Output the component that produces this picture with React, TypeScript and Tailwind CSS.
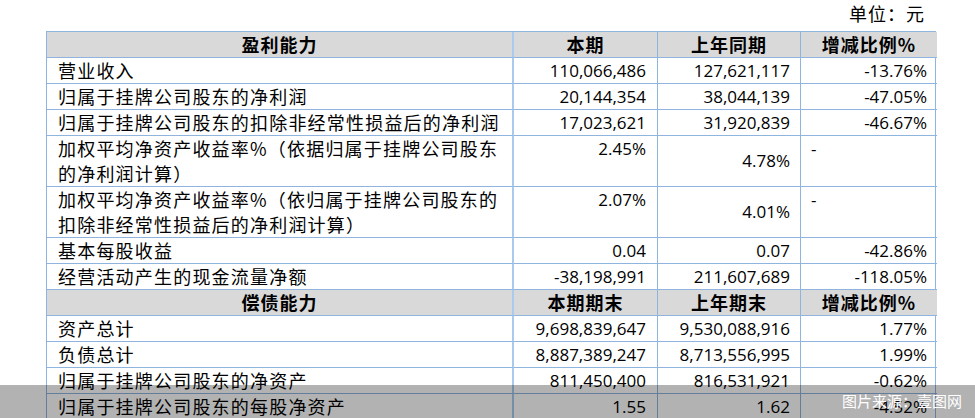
type Row = {
  label: string;
  cur: string;
  prev: string;
  rate: string;
  tall?: boolean;
  head?: boolean;
};

const rows: Row[] = [
  { label: "盈利能力", cur: "本期", prev: "上年同期", rate: "增减比例%", head: true },
  { label: "营业收入", cur: "110,066,486", prev: "127,621,117", rate: "-13.76%" },
  { label: "归属于挂牌公司股东的净利润", cur: "20,144,354", prev: "38,044,139", rate: "-47.05%" },
  { label: "归属于挂牌公司股东的扣除非经常性损益后的净利润", cur: "17,023,621", prev: "31,920,839", rate: "-46.67%" },
  {
    label: "加权平均净资产收益率%（依据归属于挂牌公司股东的净利润计算）",
    cur: "2.45%",
    prev: "4.78%",
    rate: "-",
    tall: true,
  },
  {
    label: "加权平均净资产收益率%（依归属于挂牌公司股东的扣除非经常性损益后的净利润计算）",
    cur: "2.07%",
    prev: "4.01%",
    rate: "-",
    tall: true,
  },
  { label: "基本每股收益", cur: "0.04", prev: "0.07", rate: "-42.86%" },
  { label: "经营活动产生的现金流量净额", cur: "-38,198,991", prev: "211,607,689", rate: "-118.05%" },
  { label: "偿债能力", cur: "本期期末", prev: "上年期末", rate: "增减比例%", head: true },
  { label: "资产总计", cur: "9,698,839,647", prev: "9,530,088,916", rate: "1.77%" },
  { label: "负债总计", cur: "8,887,389,247", prev: "8,713,556,995", rate: "1.99%" },
  { label: "归属于挂牌公司股东的净资产", cur: "811,450,400", prev: "816,531,921", rate: "-0.62%" },
  { label: "归属于挂牌公司股东的每股净资产", cur: "1.55", prev: "1.62", rate: "-4.52%" },
];

const cjk = "font-['Noto_Sans_CJK_SC',sans-serif]";
const num = "font-['Open_Sans','Noto_Sans_CJK_SC',sans-serif]";

function HeadRow({ row }: { row: Row }) {
  const cell = `h-[26px] bg-[#d9d9d9] border-b border-[#8fb4de] flex items-center justify-center font-bold text-[18px] tracking-[1px] ${cjk}`;
  return (
    <>
      <div className={`${cell} border-r-2 border-r-[#a9caee]`}>{row.label}</div>
      <div className={`${cell} border-r`}>{row.cur}</div>
      <div className={`${cell} border-r`}>{row.prev}</div>
      <div className={`${cell}`}>{row.rate}</div>
    </>
  );
}

function DataRow({ row }: { row: Row }) {
  const h = row.tall ? "h-[51px]" : "h-[26px]";
  const base = `${h} border-b border-[#8fb4de]`;
  if (row.tall) {
    return (
      <>
        <div className={`${base} border-r-2 border-r-[#a9caee] pl-[11px] pr-1 text-[18px] leading-[25px] tracking-[1.2px] ${cjk}`}>
          {row.label}
        </div>
        <div className={`${base} border-r pr-[11px] text-right text-[17px] leading-[25px] ${num}`}>{row.cur}</div>
        <div className={`${base} border-r pr-[10px] flex items-center justify-end text-[17px] ${num}`}>{row.prev}</div>
        <div className={`${base} pl-[10px] text-[17px] leading-[25px] ${num}`}>{row.rate}</div>
      </>
    );
  }
  return (
    <>
      <div className={`${base} border-r-2 border-r-[#a9caee] pl-[11px] flex items-center text-[18px] tracking-[1.2px] whitespace-nowrap ${cjk}`}>
        {row.label}
      </div>
      <div className={`${base} border-r pr-[11px] flex items-center justify-end text-[17px] ${num}`}>{row.cur}</div>
      <div className={`${base} border-r pr-[10px] flex items-center justify-end text-[17px] ${num}`}>{row.prev}</div>
      <div className={`${base} pr-[10px] flex items-center justify-end text-[17px] ${num}`}>{row.rate}</div>
    </>
  );
}

export default function App() {
  return (
    <div className="relative w-[975px] h-[418px] overflow-hidden bg-white text-black">
      <div className={`h-[31px] w-[936px] flex items-end justify-end pr-[11px] pb-[4px] text-[18px] tracking-[1px] ${cjk}`}>
        单位：元
      </div>
      <div className="ml-[46px] w-[890px] grid grid-cols-[467px_144px_143px_136px] border-t border-l border-r border-[#8fb4de]">
        {rows.map((r) => (r.head ? <HeadRow key={r.label} row={r} /> : <DataRow key={r.label} row={r} />))}
      </div>
      <div className="absolute left-0 right-0 top-[385px] h-[33px] bg-black/30 flex items-center justify-end pr-[13px]">
        <span className={`text-white text-[15px] ${cjk}`}>图片来源：壹图网</span>
      </div>
    </div>
  );
}
